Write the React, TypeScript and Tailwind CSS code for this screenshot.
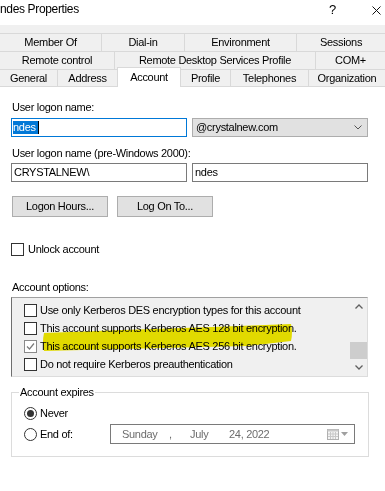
import React from "react";

const tabRows = [
  [
    { label: "Member Of", w: "w-[102px]" },
    { label: "Dial-in", w: "w-[83px]" },
    { label: "Environment", w: "w-[112px]" },
    { label: "Sessions", w: "w-[88px] border-r-0" },
  ],
  [
    { label: "Remote control", w: "w-[115px]" },
    { label: "Remote Desktop Services Profile", w: "w-[201px]" },
    { label: "COM+", w: "w-[69px] border-r-0" },
  ],
];

const options = [
  { label: "Use only Kerberos DES encryption types for this account", checked: false },
  { label: "This account supports Kerberos AES 128 bit encryption.", checked: false },
  { label: "This account supports Kerberos AES 256 bit encryption.", checked: true },
  { label: "Do not require Kerberos preauthentication", checked: false },
];

function CheckBox({ checked = false }: { checked?: boolean }) {
  return (
    <div
      className={`flex h-[13px] w-[13px] shrink-0 items-center justify-center border bg-white ${
        checked ? "border-[#8a8a8a]" : "border-[#333333]"
      }`}
    >
      {checked && (
        <svg width="9" height="9" viewBox="0 0 9 9">
          <path d="M1 4.5 L3.5 7 L8 1.5" fill="none" stroke="#7a7a7a" strokeWidth="1.2" />
        </svg>
      )}
    </div>
  );
}

function Radio({ checked = false }: { checked?: boolean }) {
  return (
    <div className="flex h-[13px] w-[13px] shrink-0 items-center justify-center rounded-full border border-[#333333] bg-white">
      {checked && <div className="h-[7px] w-[7px] rounded-full bg-[#333333]" />}
    </div>
  );
}

export default function App() {
  return (
    <div className="h-[491px] w-[385px] overflow-hidden bg-white font-['Liberation_Sans',Arial,sans-serif] text-[11px] leading-[13px] tracking-[-0.3px] text-black">
      {/* Title bar */}
      <div className="flex h-[25px] items-start bg-white pt-[2px]">
        <span className="text-[12px] leading-[14px] tracking-[-0.35px]">ndes Properties</span>
        <span className="ml-auto mr-[36px] mt-[1px] text-[13px] leading-[14px]">?</span>
        <svg className="mr-[4px] mt-[4px]" width="9" height="9" viewBox="0 0 9 9">
          <path d="M0.5 0.5 L8.5 8.5 M8.5 0.5 L0.5 8.5" stroke="#111" strokeWidth="1" />
        </svg>
      </div>

      {/* Tabs */}
      <div className="bg-[#f0f0f0] pt-[8px]">
        {tabRows.map((row, i) => (
          <div key={i} className="flex">
            {row.map((t) => (
              <div
                key={t.label}
                className={`flex h-[18px] items-center justify-center border-t border-r border-[#d9d9d9] ${t.w}`}
              >
                {t.label}
              </div>
            ))}
          </div>
        ))}
        <div className="flex h-[18px] items-start">
          <div className="flex h-[18px] w-[58px] items-center justify-center border-t border-r border-b border-[#d9d9d9]">
            General
          </div>
          <div className="flex h-[18px] w-[59px] items-center justify-center border-t border-b border-[#d9d9d9]">
            Address
          </div>
          <div className="relative -mt-[2px] flex h-[20px] w-[64px] items-center justify-center border-x border-t border-[#d9d9d9] bg-white">
            Account
          </div>
          <div className="flex h-[18px] w-[50px] items-center justify-center border-t border-r border-b border-[#d9d9d9]">
            Profile
          </div>
          <div className="flex h-[18px] w-[78px] items-center justify-center border-t border-r border-b border-[#d9d9d9]">
            Telephones
          </div>
          <div className="flex h-[18px] w-[76px] items-center justify-center border-t border-b border-[#d9d9d9]">
            Organization
          </div>
        </div>
      </div>

      {/* Page */}
      <div className="pl-[11px]">
        <div className="ml-[1px] mt-[14px]">User logon name:</div>
        <div className="mt-[4px] flex gap-[5px]">
          <div className="flex h-[19px] w-[176px] items-center border border-[#0078d7] bg-white pl-[1px]">
            <span className="h-[13px] bg-[#0078d7] pr-[2px] text-white">ndes</span>
            <span className="h-[13px] w-px bg-black" />
          </div>
          <div className="flex h-[19px] w-[176px] items-center border border-[#adadad] bg-[#e1e1e1] pl-[3px] pr-[5px]">
            <span>@crystalnew.com</span>
            <svg className="ml-auto" width="8" height="5" viewBox="0 0 8 5">
              <path d="M0.5 0.5 L4 4 L7.5 0.5" fill="none" stroke="#555" strokeWidth="1" />
            </svg>
          </div>
        </div>

        <div className="ml-[1px] mt-[10px]">User logon name (pre-Windows 2000):</div>
        <div className="mt-[3px] flex gap-[5px]">
          <div className="flex h-[19px] w-[176px] items-center border border-[#7a7a7a] bg-white pl-[2px]">
            CRYSTALNEW\
          </div>
          <div className="flex h-[19px] w-[176px] items-center border border-[#7a7a7a] bg-white pl-[2px]">
            ndes
          </div>
        </div>

        <div className="ml-[1px] mt-[14px] flex gap-[9px]">
          <div className="flex h-[21px] w-[96px] items-center justify-center border border-[#adadad] bg-[#e1e1e1]">
            Logon Hours...
          </div>
          <div className="flex h-[21px] w-[96px] items-center justify-center border border-[#adadad] bg-[#e1e1e1]">
            Log On To...
          </div>
        </div>

        <div className="mt-[26px] flex h-[13px] items-center gap-[4px]">
          <CheckBox />
          <span>Unlock account</span>
        </div>

        <div className="ml-[1px] mt-[25px]">Account options:</div>

        {/* List box */}
        <div className="relative mt-[3px] flex h-[80px] w-[357px] border border-t-[#a0a0a0] border-l-[#6e6e6e] border-r-[#dcdcdc] border-b-[#dcdcdc] bg-[#f0f0f0]">
          <div className="flex-1 pl-[12px] pt-[3px]">
            {options.map((o) => (
              <div key={o.label} className="flex h-[18px] items-center gap-[3px]">
                <CheckBox checked={o.checked} />
                <span className="whitespace-nowrap">{o.label}</span>
              </div>
            ))}
          </div>
          <div className="flex w-[17px] flex-col">
            <div className="flex h-[17px] items-center justify-center">
              <svg width="8" height="5" viewBox="0 0 8 5">
                <path d="M0.5 4.5 L4 1 L7.5 4.5" fill="none" stroke="#606060" strokeWidth="1.3" />
              </svg>
            </div>
            <div className="flex h-[44px] flex-col justify-end">
              <div className="h-[17px] bg-[#cdcdcd]" />
            </div>
            <div className="flex h-[17px] items-center justify-center">
              <svg width="8" height="5" viewBox="0 0 8 5">
                <path d="M0.5 0.5 L4 4 L7.5 0.5" fill="none" stroke="#606060" strokeWidth="1.3" />
              </svg>
            </div>
          </div>
          {/* highlighter annotation */}
          <svg
            className="pointer-events-none absolute left-0 top-0 mix-blend-multiply"
            width="340"
            height="78"
            viewBox="0 0 340 78"
          >
            <path
              d="M32 35 Q30 44 32 53 L150 50 L236 48 L279 43 Q281 34 279 26 L200 29 L110 32 Z"
              fill="#f0e800"
            />
          </svg>
        </div>

        {/* Account expires */}
        <fieldset className="mt-[9px] w-[358px] border border-[#dcdcdc]">
          <legend className="ml-[7px] px-[1px] leading-[13px]">Account expires</legend>
          <div className="pb-[12px] pl-[12px] pt-[8px]">
            <div className="flex h-[13px] items-center gap-[3px]">
              <Radio checked />
              <span>Never</span>
            </div>
            <div className="mt-[4px] flex h-[20px] items-center">
              <div className="flex w-[86px] items-center gap-[3px]">
                <Radio />
                <span>End of:</span>
              </div>
              <div className="flex h-[20px] w-[245px] items-center border border-[#7a7a7a] bg-white pl-[11px] pr-[6px] text-[#6d6d6d]">
                <span className="w-[47px]">Sunday</span>
                <span className="w-[21px]">,</span>
                <span className="w-[39px]">July</span>
                <span>24, 2022</span>
                <svg className="ml-auto" width="12" height="11" viewBox="0 0 12 11">
                  <rect x="0.5" y="0.5" width="11" height="10" fill="#f4f4f4" stroke="#b0b0b0" />
                  <rect x="0.5" y="0.5" width="11" height="2" fill="#c8c8c8" />
                  <path d="M3.5 3 V10 M6 3 V10 M8.5 3 V10 M1 5 H11 M1 7.5 H11" stroke="#c8c8c8" strokeWidth="1" />
                </svg>
                <svg className="ml-[2px]" width="7" height="4" viewBox="0 0 7 4">
                  <path d="M0 0 H7 L3.5 4 Z" fill="#a0a0a0" />
                </svg>
              </div>
            </div>
          </div>
        </fieldset>
      </div>
    </div>
  );
}
